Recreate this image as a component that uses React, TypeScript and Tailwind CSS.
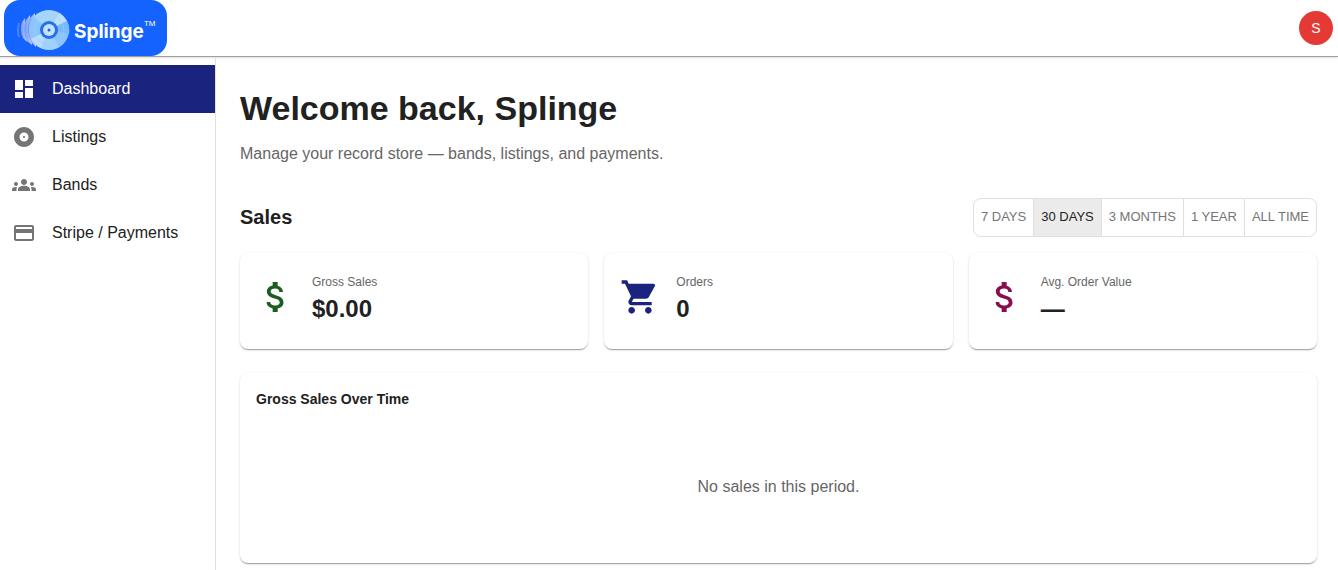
import { useState } from 'react';
import type { IconType } from 'react-icons';
import {
  MdAlbum,
  MdAttachMoney,
  MdDashboard,
  MdGroups,
  MdPayment,
  MdShoppingCart,
} from 'react-icons/md';

interface NavItem {
  label: string;
  href: string;
  icon: IconType;
}

interface StatCardProps {
  label: string;
  value: string;
  icon: IconType;
  iconClass: string;
}

const navItems: NavItem[] = [
  { label: 'Dashboard', href: '#dashboard', icon: MdDashboard },
  { label: 'Listings', href: '#listings', icon: MdAlbum },
  { label: 'Bands', href: '#bands', icon: MdGroups },
  { label: 'Stripe / Payments', href: '#payments', icon: MdPayment },
];

const periods = ['7 DAYS', '30 DAYS', '3 MONTHS', '1 YEAR', 'ALL TIME'];

const cardClass =
  'rounded-lg bg-white shadow-[0_2px_1px_-1px_rgba(0,0,0,0.2),0_1px_1px_0_rgba(0,0,0,0.14),0_1px_3px_0_rgba(0,0,0,0.12)]';

const Logo = () => (
  <a
    href="#home"
    className="flex h-14 items-center rounded-2xl bg-[#1463ff] px-3 pt-1 text-white"
  >
    <svg viewBox="0 0 54 42" className="h-[42px] w-[54px]" aria-hidden="true">
      <defs>
        <linearGradient id="trail" x1="0" x2="1">
          <stop offset="0" stopColor="#6b95fa" />
          <stop offset="1" stopColor="#c3cffb" />
        </linearGradient>
      </defs>
      {/* Motion trail */}
      <path d="M3 14q-2 7 0 14" fill="none" stroke="#4a82fb" strokeWidth="2" />
      <path d="M9 9L6 13Q3 21 7 29L11 33Z" fill="url(#trail)" />
      <path d="M14 6L10 11Q6 21 11 32L16 36Z" fill="url(#trail)" />
      <path d="M19 4L14 9Q9 21 15 33L20 38Z" fill="url(#trail)" />
      {/* Record */}
      <circle cx="33" cy="21" r="20" fill="#8cc5fb" />
      <path d="M33 21L18 8A20 20 0 0 1 43 4Z" fill="#a6d5fb" />
      <path d="M33 21L43 4A20 20 0 0 1 51 12Z" fill="#bfe0fc" />
      <path d="M33 21L51 12A20 20 0 0 1 53 25Z" fill="#7ab9fa" />
      <path d="M33 21L43 38A20 20 0 0 1 25 39Z" fill="#a0d0fc" />
      <path d="M33 21L25 39A20 20 0 0 1 15 30Z" fill="#b9dcfc" />
      <circle cx="33" cy="21" r="15" fill="none" stroke="#9dcffb" strokeWidth="1" opacity="0.6" />
      <circle cx="33" cy="21" r="9" fill="#2470ee" />
      <circle cx="33" cy="21" r="6" fill="#c3e2fd" />
      <circle cx="33" cy="21" r="1.5" fill="#1d62e0" />
    </svg>
    <span className="pt-1 pl-1 font-['Inter',sans-serif] text-[19px] leading-6 font-bold">
      Splinge
    </span>
    <span className="self-start pt-3.5 text-[8px] leading-3">TM</span>
  </a>
);

const StatCard: React.FC<StatCardProps> = ({ label, value, icon: Icon, iconClass }) => (
  <div className={`${cardClass} flex min-h-24 gap-4 px-4 pt-4 pb-6`}>
    <Icon className={`size-10 self-center ${iconClass}`} />
    <div>
      <p className="text-xs leading-[26px] text-[#666666]">{label}</p>
      <p className="text-2xl leading-7 font-bold">{value}</p>
    </div>
  </div>
);

const App: React.FC = () => {
  const [activeNav, setActiveNav] = useState('Dashboard');
  const [period, setPeriod] = useState('30 DAYS');

  return (
    <div className="flex min-h-screen flex-col bg-white font-['Liberation_Sans',Arial,sans-serif] text-[#212121]">
      <header className="flex items-center justify-between border-b border-[#9e9e9e] bg-white pr-[5px] pl-1 shadow-[0_1px_2px_0_rgba(0,0,0,0.12)]">
        <Logo />
        <button
          aria-label="Account"
          className="size-[34px] rounded-full bg-[#e53935] text-sm text-white"
        >
          S
        </button>
      </header>

      <div className="flex flex-1">
        {/* Sidebar */}
        <nav className="w-54 shrink-0 border-r border-[#e0e0e0] pt-2">
          {navItems.map(({ label, href, icon: Icon }) => {
            const active = label === activeNav;
            return (
              <a
                key={label}
                href={href}
                onClick={() => setActiveNav(label)}
                className={`flex h-12 items-center gap-4 px-3 ${active ? 'bg-[#1a237e] text-white' : ''}`}
              >
                <Icon className={`size-6 ${active ? 'text-white' : 'text-[#757575]'}`} />
                <span>{label}</span>
              </a>
            );
          })}
        </nav>

        <main className="min-w-0 flex-1 pt-[31px] pr-[21px] pb-[7px] pl-6">
          <h1 className="text-[34px] leading-10 font-bold">Welcome back, Splinge</h1>
          <p className="mt-3.5 text-base text-[#666666]">
            Manage your record store — bands, listings, and payments.
          </p>

          <div className="mt-8 flex items-center justify-between">
            <h2 className="pb-0.5 text-xl font-bold">Sales</h2>
            <div className="flex divide-x divide-[#e0e0e0] overflow-hidden rounded-lg border border-[#e0e0e0]">
              {periods.map(p => (
                <button
                  key={p}
                  onClick={() => setPeriod(p)}
                  aria-pressed={p === period}
                  className={`px-[7px] pt-1.5 pb-2 text-[13px] leading-[23px] ${
                    p === period ? 'bg-[#ebebeb] text-[#212121]' : 'text-[#757575]'
                  }`}
                >
                  {p}
                </button>
              ))}
            </div>
          </div>

          <div className="mt-4 grid grid-cols-3 gap-4">
            <StatCard
              label="Gross Sales"
              value="$0.00"
              icon={MdAttachMoney}
              iconClass="text-[#1b5e20]"
            />
            <StatCard label="Orders" value="0" icon={MdShoppingCart} iconClass="text-[#1a237e]" />
            <StatCard
              label="Avg. Order Value"
              value="—"
              icon={MdAttachMoney}
              iconClass="text-[#880e4f]"
            />
          </div>

          <section className={`${cardClass} mt-6 p-4`}>
            <h3 className="text-sm font-bold">Gross Sales Over Time</h3>
            <div className="flex h-[138px] items-center justify-center pt-[18px]">
              <p className="text-base text-[#666666]">No sales in this period.</p>
            </div>
          </section>
        </main>
      </div>
    </div>
  );
};

export default App;
